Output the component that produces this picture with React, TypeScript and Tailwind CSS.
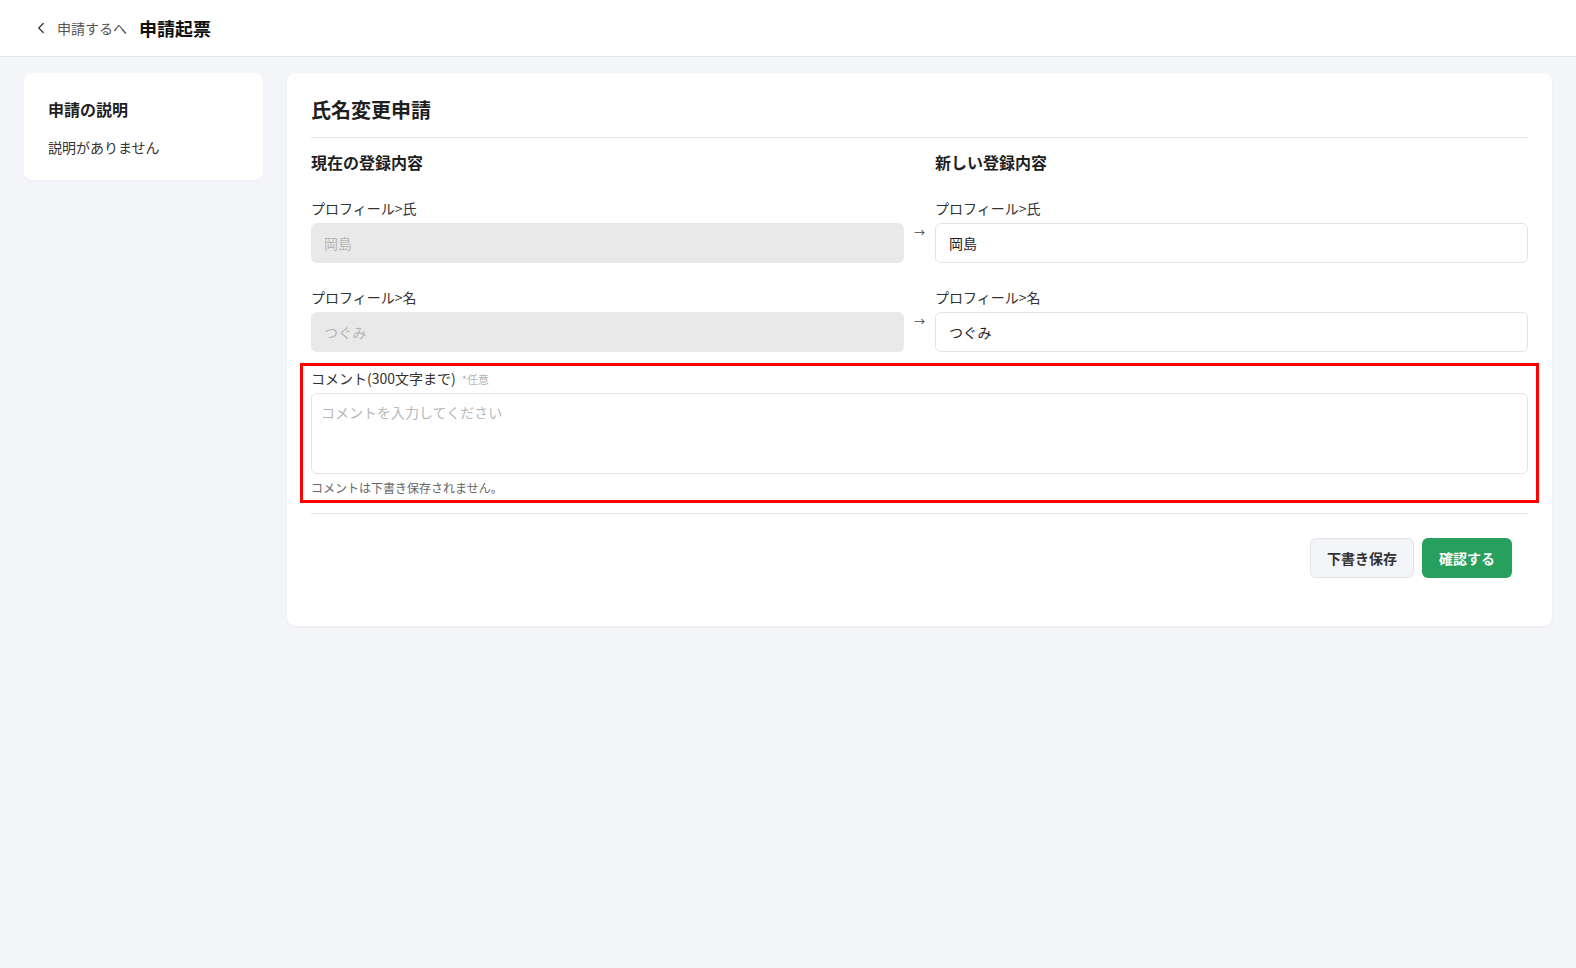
import React from 'react';
import { ChevronLeft } from 'lucide-react';

interface FieldRow {
  label: string;
  current: string;
  next: string;
}

const fields: FieldRow[] = [
  { label: 'プロフィール>氏', current: '岡島', next: '岡島' },
  { label: 'プロフィール>名', current: 'つぐみ', next: 'つぐみ' },
];

const font = { fontFamily: '"Noto Sans CJK JP", "Noto Sans", sans-serif' };

export default function App() {
  return (
    <div className="min-h-[968px] bg-[#f4f5f9] text-[#1f1f1f]" style={font}>
      {/* ヘッダー */}
      <header className="h-[57px] bg-white border-b border-[#e3e4e8] flex items-center pl-[32px]">
        <button className="flex items-center text-[#555] text-[14px]">
          <ChevronLeft className="w-[18px] h-[18px] mr-[7px] text-[#333]" strokeWidth={1.6} />
          <span>申請するへ</span>
        </button>
        <h1 className="ml-[12px] text-[18px] font-bold text-[#111]">申請起票</h1>
      </header>

      <div className="flex items-start gap-6 px-6 pt-4">
        {/* 説明カード */}
        <aside className="w-[239px] shrink-0 bg-white rounded-lg px-6 pt-6 pb-[23px] shadow-[0_1px_2px_rgba(0,0,0,0.03)]">
          <h2 className="text-[16px] leading-6 font-bold">申請の説明</h2>
          <p className="mt-4 text-[14px] leading-5 text-[#333]">説明がありません</p>
        </aside>

        {/* 申請フォーム */}
        <main className="flex-1 bg-white rounded-lg px-6 pt-[23px] pb-12 shadow-[0_1px_3px_rgba(0,0,0,0.05)]">
          <h2 className="text-[20px] leading-7 font-bold pb-[13px] border-b border-[#e3e4e8]">氏名変更申請</h2>

          <div className="grid grid-cols-[1fr_31px_1fr] mt-3">
            <h3 className="text-[16px] leading-6 font-bold">現在の登録内容</h3>
            <div />
            <h3 className="text-[16px] leading-6 font-bold">新しい登録内容</h3>

            {fields.map((f, i) => (
              <React.Fragment key={f.label}>
                <label className={`${i === 0 ? 'mt-6' : 'mt-6'} mb-[5px] text-[14px] leading-5 text-[#333]`}>
                  {f.label}
                </label>
                <div />
                <label className={`${i === 0 ? 'mt-6' : 'mt-6'} mb-[5px] text-[14px] leading-5 text-[#333]`}>
                  {f.label}
                </label>

                <div className="h-10 rounded-md bg-[#e9e9e9] px-[13px] flex items-center text-[14px] text-[#b5b5b5]">
                  {f.current}
                </div>
                <div className="flex justify-center pt-[1px] text-[11px] leading-4 text-[#444]">→</div>
                <input
                  defaultValue={f.next}
                  className="h-10 rounded-md border border-[#e3e3e3] bg-white px-[13px] text-[14px] text-[#222] outline-none"
                />
              </React.Fragment>
            ))}
          </div>

          {/* コメント */}
          <div className="mt-[11px] -mx-[11px] border-[3px] border-[#ff0000] px-2 pt-[2px] pb-1">
            <div className="flex items-baseline">
              <span className="text-[14px] leading-5 text-[#333]">コメント(300文字まで)</span>
              <span className="ml-[6px] text-[11px] text-[#b5b5b5]">*任意</span>
            </div>
            <textarea
              placeholder="コメントを入力してください"
              className="mt-[5px] block w-full h-[81px] resize-none rounded-md border border-[#e3e3e3] px-[9px] py-[8px] text-[14px] leading-5 placeholder:text-[#b8b8b8] outline-none"
            />
            <p className="mt-[6px] text-[12px] leading-4 text-[#666]">コメントは下書き保存されません。</p>
          </div>

          <div className="mt-[10px] border-t border-[#e3e4e8]" />

          <div className="flex justify-end gap-2 mt-6 pr-4">
            <button className="h-10 px-4 rounded-md border border-[#e3e4e8] bg-[#f4f5f9] text-[14px] font-bold text-[#333]">
              下書き保存
            </button>
            <button className="h-10 px-[17px] rounded-md bg-[#27a05d] text-[14px] font-bold text-white">
              確認する
            </button>
          </div>
        </main>
      </div>
    </div>
  );
}
